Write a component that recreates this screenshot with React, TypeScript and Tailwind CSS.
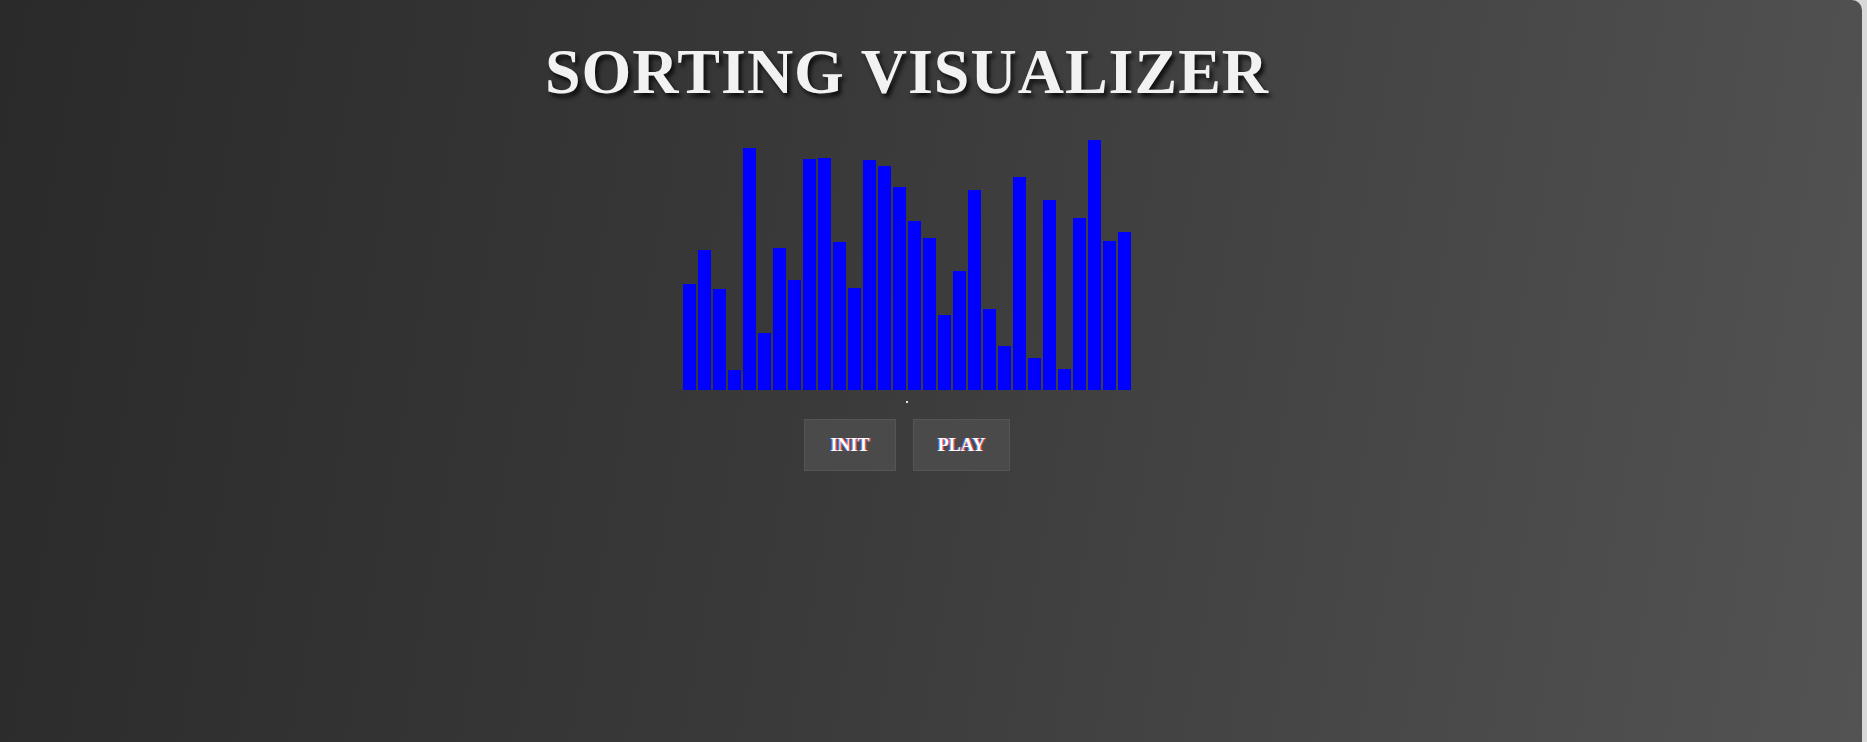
import React from "react";

const heights = [
  106, 140, 101, 20, 242, 57, 142, 110, 231, 232, 148, 102, 230, 224, 203,
  169, 152, 75, 119, 200, 81, 44, 213, 32, 190, 21, 172, 250, 149, 158,
];

export default function App() {
  return (
    <div className="h-[742px] w-full bg-[#d9d9d9]">
      <div className="h-full w-[1862px] overflow-hidden rounded-tr-[10px] bg-[linear-gradient(100deg,#2a2a2a_0%,#3a3a3a_45%,#535353_100%)] pr-[48px]">
        <div className="flex flex-col items-center">
          <h1 className="mt-[40px] font-['Liberation_Serif',serif] text-[64px] font-bold leading-none tracking-[1px] text-[#f2f2f2] [text-shadow:3px_4px_4px_rgba(0,0,0,0.75)]">
            SORTING VISUALIZER
          </h1>
          <div className="mt-[36px] flex h-[250px] items-end gap-[2px]">
            {heights.map((h, i) => (
              <div key={i} className="w-[13px] bg-[#0000ff]" style={{ height: h }} />
            ))}
          </div>
          <div className="mt-[11px] h-[2px] w-[2px] bg-[#e5e5e5]" />
          <div className="mt-[16px] flex gap-[17px]">
            <button className="h-[52px] w-[92px] border border-[#555] bg-[#4a4a4a] font-['Liberation_Serif',serif] text-[18px] font-bold text-white [text-shadow:1px_0_0_#f44,-1px_0_0_#48f]">
              INIT
            </button>
            <button className="h-[52px] w-[97px] border border-[#555] bg-[#4a4a4a] font-['Liberation_Serif',serif] text-[18px] font-bold text-white [text-shadow:1px_0_0_#f44,-1px_0_0_#48f]">
              PLAY
            </button>
          </div>
        </div>
      </div>
    </div>
  );
}
